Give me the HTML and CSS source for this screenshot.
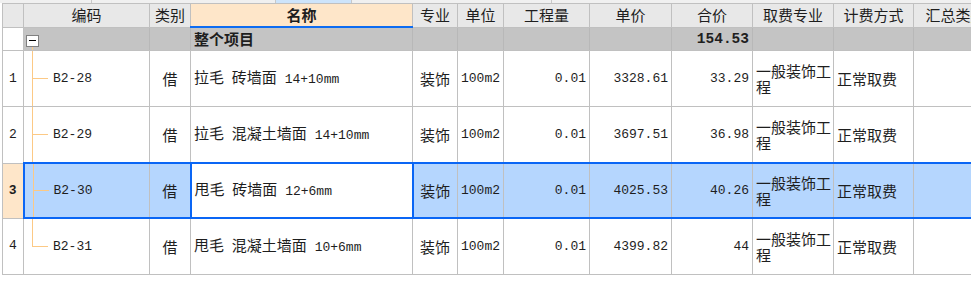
FILE: index.html
```html
<!DOCTYPE html>
<html lang="zh-CN">
<head>
  <meta charset="UTF-8">
  <title>分部分项</title>
  <link rel="stylesheet" href="styles.css">
</head>
<body>

  <!-- scrolled-away part of the toolbar above -->
  <div class="top-strip">
    <span class="ts ts-1"></span>
    <span class="ts ts-2"></span>
    <span class="ts ts-3 ts-hl"></span>
    <span class="ts ts-4"></span>
    <span class="ts ts-5"></span>
  </div>

  <div class="grid-wrap">
    <table class="grid">
      <colgroup>
        <col class="w-no">
        <col class="w-code">
        <col class="w-type">
        <col class="w-name">
        <col class="w-major">
        <col class="w-unit">
        <col class="w-qty">
        <col class="w-price">
        <col class="w-total">
        <col class="w-fee">
        <col class="w-mode">
        <col class="w-sum">
      </colgroup>
      <thead>
        <tr>
          <th></th>
          <th>编码</th>
          <th>类别</th>
          <th class="cur-col">名称</th>
          <th>专业</th>
          <th>单位</th>
          <th>工程量</th>
          <th>单价</th>
          <th>合价</th>
          <th>取费专业</th>
          <th>计费方式</th>
          <th>汇总类别</th>
        </tr>
      </thead>
      <tbody>
        <tr class="group">
          <td class="no"></td>
          <td class="code tree-root"><span class="fold"><span class="fold-dash"></span></span></td>
          <td></td>
          <td class="name">整个项目</td>
          <td></td>
          <td></td>
          <td></td>
          <td></td>
          <td class="num mono">154.53</td>
          <td></td>
          <td></td>
          <td></td>
        </tr>
        <tr class="item">
          <td class="no">1</td>
          <td class="code tree mono">B2-28</td>
          <td class="center">借</td>
          <td class="name">拉毛<span class="mono"> </span>砖墙面<span class="mono"> 14+10mm</span></td>
          <td class="center">装饰</td>
          <td class="mono">100m2</td>
          <td class="num mono">0.01</td>
          <td class="num mono">3328.61</td>
          <td class="num mono">33.29</td>
          <td class="fee">一般装饰工程</td>
          <td>正常取费</td>
          <td></td>
        </tr>
        <tr class="item">
          <td class="no">2</td>
          <td class="code tree mono">B2-29</td>
          <td class="center">借</td>
          <td class="name">拉毛<span class="mono"> </span>混凝土墙面<span class="mono"> 14+10mm</span></td>
          <td class="center">装饰</td>
          <td class="mono">100m2</td>
          <td class="num mono">0.01</td>
          <td class="num mono">3697.51</td>
          <td class="num mono">36.98</td>
          <td class="fee">一般装饰工程</td>
          <td>正常取费</td>
          <td></td>
        </tr>
        <tr class="item sel">
          <td class="no">3</td>
          <td class="code tree mono">B2-30</td>
          <td class="center">借</td>
          <td class="name">甩毛<span class="mono"> </span>砖墙面<span class="mono"> 12+6mm</span></td>
          <td class="center">装饰</td>
          <td class="mono">100m2</td>
          <td class="num mono">0.01</td>
          <td class="num mono">4025.53</td>
          <td class="num mono">40.26</td>
          <td class="fee">一般装饰工程</td>
          <td>正常取费</td>
          <td></td>
        </tr>
        <tr class="item">
          <td class="no">4</td>
          <td class="code tree tree-end mono">B2-31</td>
          <td class="center">借</td>
          <td class="name">甩毛<span class="mono"> </span>混凝土墙面<span class="mono"> 10+6mm</span></td>
          <td class="center">装饰</td>
          <td class="mono">100m2</td>
          <td class="num mono">0.01</td>
          <td class="num mono">4399.82</td>
          <td class="num mono">44</td>
          <td class="fee">一般装饰工程</td>
          <td>正常取费</td>
          <td></td>
        </tr>
      </tbody>
    </table>
  </div>

</body>
</html>
```

FILE: styles.css
```css
body {
  margin: 0;
  background-color: #fff;
  font-family: "Noto Sans CJK SC", sans-serif;
  font-size: 15px;
  color: #1e1e1e;
}

/* Top strip */
.top-strip {
  display: flex;
  height: 3px;
  background-color: #f0f0f0;
  overflow: hidden;
}

.ts {
  height: 3px;
  border-right: 1px solid #c8c8c8;
}

.ts-1 { width: 91px; }
.ts-2 { width: 183px; }
.ts-3 { width: 75px; }
.ts-4 { width: 199px; }
.ts-5 { flex: 1; border-right: none; }

.ts-hl {
  background-color: #cde4fb;
}

/* Grid */
.grid-wrap {
  width: 971px;
  overflow: hidden;
}

.grid {
  border-collapse: collapse;
  table-layout: fixed;
  width: 995px;
  margin-left: 2px;
}

.w-no { width: 21px; }
.w-code { width: 126px; }
.w-type { width: 41px; }
.w-name { width: 222px; }
.w-major { width: 45px; }
.w-unit { width: 46px; }
.w-qty { width: 86px; }
.w-price { width: 82px; }
.w-total { width: 81px; }
.w-fee { width: 81px; }
.w-mode { width: 80px; }
.w-sum { width: 84px; }

.grid th,
.grid td {
  border: 1px solid #c0c0c0;
  padding: 0 3px;
  line-height: 16px;
  overflow: hidden;
  vertical-align: middle;
}

.grid th {
  height: 22px;
  background-color: #e8e8e8;
  font-weight: normal;
  text-align: center;
  white-space: nowrap;
}

.grid th.cur-col {
  background-color: #fee6c9;
  border-bottom: 2px solid #0d6cf2;
  font-weight: bold;
}

.mono {
  font-family: "Liberation Mono", monospace;
  font-size: 13px;
}

.center {
  text-align: center;
}

.num {
  text-align: right;
}

.grid td.fee {
  padding-right: 0;
}

.no {
  text-align: center;
  padding: 0;
  font-family: "Liberation Mono", monospace;
  font-size: 13px;
}

/* Group row */
.group td {
  height: 22px;
  background-color: #c4c4c4;
  font-weight: bold;
  border-color: #b8b8b8 #b8b8b8 #c0c0c0;
}

.group td.num {
  font-size: 14.5px;
}

.group td.no {
  background-color: #fff;
  border-color: #c0c0c0;
}

.fold {
  display: inline-flex;
  align-items: center;
  justify-content: center;
  width: 11px;
  height: 10px;
  border: 1px solid #808080;
  background-color: #fff;
  vertical-align: middle;
}

.fold-dash {
  width: 7px;
  height: 1px;
  background-color: #000;
}

/* Item rows */
.item td {
  height: 55px;
}

.item td.code {
  padding-left: 29px;
}

.group td.code {
  padding-left: 2px;
}

/* Tree lines */
.tree,
.tree-root {
  background-image: linear-gradient(#fcc985, #fcc985), linear-gradient(#fcc985, #fcc985);
  background-repeat: no-repeat;
}

.tree {
  background-position: 8px 0, 8px 50%;
  background-size: 1px 100%, 16px 1px;
}

.tree-end {
  background-size: 1px 50%, 16px 1px;
}

.tree-root {
  background-image: linear-gradient(#fcc985, #fcc985);
  background-position: 8px 100%;
  background-size: 1px 6px;
}

/* Selected row */
.sel td {
  height: 53px;
  background-color: #b5d6fe;
  border-top: 2px solid #0a66f5;
  border-bottom: 2px solid #0a66f5;
}

.sel td.no {
  background-color: #fee6c9;
  font-weight: bold;
  border-top: 1px solid #c0c0c0;
  border-bottom: 1px solid #c0c0c0;
}

.sel td.code {
  border-left: 2px solid #0a66f5;
}

.sel td.name {
  background-color: #fff;
  border-left: 2px solid #0a66f5;
  border-right: 2px solid #0a66f5;
}
```
